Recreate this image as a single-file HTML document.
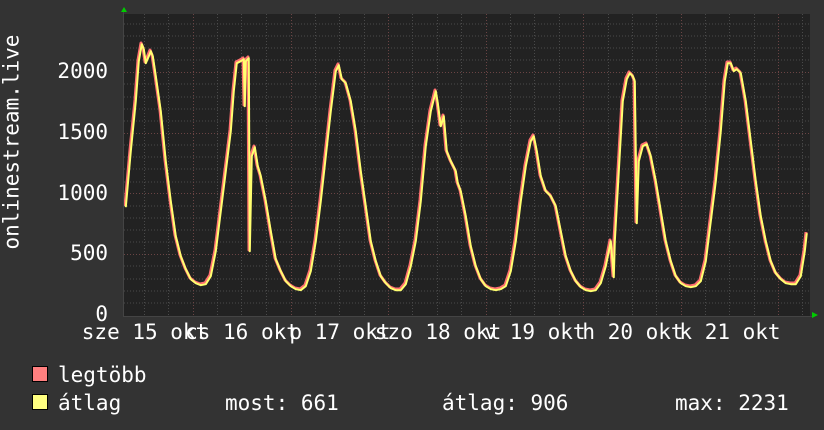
<!DOCTYPE html>
<html><head><meta charset="utf-8"><style>
body{margin:0;background:#333;width:824px;height:430px;overflow:hidden;position:relative;font-family:"DejaVu Sans Mono","Liberation Mono",monospace;color:#fff}
.t{position:absolute;font-size:21px;white-space:pre;line-height:1}
.c{width:200px;text-align:center}
.sq{position:absolute;width:14px;height:14px;border:1px solid #000}
</style></head><body>
<svg width="824" height="430" style="position:absolute;left:0;top:0">
<rect x="124" y="14" width="686" height="302" fill="#222"/>
<g stroke="#4a4a4a" stroke-dasharray="1,2">
<line x1="124" y1="303" x2="810" y2="303"/><line x1="124" y1="291" x2="810" y2="291"/><line x1="124" y1="279" x2="810" y2="279"/><line x1="124" y1="266" x2="810" y2="266"/>
<line x1="124" y1="242" x2="810" y2="242"/><line x1="124" y1="230" x2="810" y2="230"/><line x1="124" y1="218" x2="810" y2="218"/><line x1="124" y1="206" x2="810" y2="206"/>
<line x1="124" y1="182" x2="810" y2="182"/><line x1="124" y1="169" x2="810" y2="169"/><line x1="124" y1="157" x2="810" y2="157"/><line x1="124" y1="145" x2="810" y2="145"/>
<line x1="124" y1="121" x2="810" y2="121"/><line x1="124" y1="109" x2="810" y2="109"/><line x1="124" y1="97" x2="810" y2="97"/><line x1="124" y1="84" x2="810" y2="84"/>
<line x1="124" y1="60" x2="810" y2="60"/><line x1="124" y1="48" x2="810" y2="48"/><line x1="124" y1="36" x2="810" y2="36"/><line x1="124" y1="24" x2="810" y2="24"/>
<line x1="144.5" y1="14" x2="144.5" y2="316"/><line x1="168.5" y1="14" x2="168.5" y2="316"/><line x1="217.5" y1="14" x2="217.5" y2="316"/><line x1="241.5" y1="14" x2="241.5" y2="316"/><line x1="266.5" y1="14" x2="266.5" y2="316"/>
<line x1="315.5" y1="14" x2="315.5" y2="316"/><line x1="339.5" y1="14" x2="339.5" y2="316"/><line x1="364.5" y1="14" x2="364.5" y2="316"/>
<line x1="412.5" y1="14" x2="412.5" y2="316"/><line x1="437.5" y1="14" x2="437.5" y2="316"/><line x1="461.5" y1="14" x2="461.5" y2="316"/>
<line x1="510.5" y1="14" x2="510.5" y2="316"/><line x1="534.5" y1="14" x2="534.5" y2="316"/><line x1="559.5" y1="14" x2="559.5" y2="316"/>
<line x1="608.5" y1="14" x2="608.5" y2="316"/><line x1="632.5" y1="14" x2="632.5" y2="316"/><line x1="656.5" y1="14" x2="656.5" y2="316"/>
<line x1="705.5" y1="14" x2="705.5" y2="316"/><line x1="729.5" y1="14" x2="729.5" y2="316"/><line x1="754.5" y1="14" x2="754.5" y2="316"/><line x1="802.5" y1="14" x2="802.5" y2="316"/>
</g>
<g stroke="#6a4444" stroke-dasharray="1,2">
<line x1="124" y1="254.5" x2="810" y2="254.5"/><line x1="124" y1="193.5" x2="810" y2="193.5"/><line x1="124" y1="133.5" x2="810" y2="133.5"/><line x1="124" y1="72.5" x2="810" y2="72.5"/>
<line x1="193.5" y1="14" x2="193.5" y2="316"/><line x1="291.5" y1="14" x2="291.5" y2="316"/><line x1="388.5" y1="14" x2="388.5" y2="316"/><line x1="486.5" y1="14" x2="486.5" y2="316"/><line x1="583.5" y1="14" x2="583.5" y2="316"/><line x1="681.5" y1="14" x2="681.5" y2="316"/><line x1="778.5" y1="14" x2="778.5" y2="316"/>
</g>
<g fill="none" stroke-linejoin="round">
<polyline stroke="#ff7070" stroke-width="3" points="125,206 130,150 135,100 138,60 141,43 143,48 145,62 148,55 150,50 152,55 155,75 160,110 165,160 170,200 175,235 180,255 185,268 190,278 195,282 200,284 205,283 210,275 215,250 220,210 225,170 230,130 233,90 236,62 240,60 243,58 244,105 245,60 248,57 249,250 251,155 254,146 257,165 260,175 265,200 270,230 275,258 280,270 285,280 290,285 295,288 300,289 305,285 310,270 315,240 320,200 325,155 330,110 335,70 338,64 341,78 345,82 350,100 355,130 360,170 365,205 370,240 375,260 380,275 385,282 390,287 395,289 400,289 405,283 410,265 415,240 420,200 425,145 430,110 435,90 437,102 440,125 443,115 446,150 450,160 455,170 457,182 460,190 465,215 470,245 475,265 480,278 485,285 490,288 495,289 500,288 505,285 510,270 515,240 520,200 525,165 530,140 533,135 536,150 540,175 545,190 550,195 555,205 560,230 565,255 570,270 575,280 580,286 585,289 590,290 595,289 600,282 605,265 610,240 613,276 614,240 618,170 622,100 626,78 629,72 632,75 634,80 636,222 638,160 642,145 646,143 650,155 655,180 660,210 665,240 670,260 675,275 680,282 685,285 690,286 695,285 700,280 705,260 710,220 715,180 720,130 724,80 727,62 730,62 733,70 736,68 740,72 745,100 750,140 755,180 760,215 765,240 770,260 775,272 780,278 785,282 790,283 795,283 800,275 804,250 806,232"/>
<polyline stroke="#ffff70" stroke-width="2" transform="translate(0.8,1.2)" points="125,206 130,150 135,100 138,60 141,43 143,48 145,62 148,55 150,50 152,55 155,75 160,110 165,160 170,200 175,235 180,255 185,268 190,278 195,282 200,284 205,283 210,275 215,250 220,210 225,170 230,130 233,90 236,62 240,60 243,58 244,105 245,60 248,57 249,250 251,155 254,146 257,165 260,175 265,200 270,230 275,258 280,270 285,280 290,285 295,288 300,289 305,285 310,270 315,240 320,200 325,155 330,110 335,70 338,64 341,78 345,82 350,100 355,130 360,170 365,205 370,240 375,260 380,275 385,282 390,287 395,289 400,289 405,283 410,265 415,240 420,200 425,145 430,110 435,90 437,102 440,125 443,115 446,150 450,160 455,170 457,182 460,190 465,215 470,245 475,265 480,278 485,285 490,288 495,289 500,288 505,285 510,270 515,240 520,200 525,165 530,140 533,135 536,150 540,175 545,190 550,195 555,205 560,230 565,255 570,270 575,280 580,286 585,289 590,290 595,289 600,282 605,265 610,240 613,276 614,240 618,170 622,100 626,78 629,72 632,75 634,80 636,222 638,160 642,145 646,143 650,155 655,180 660,210 665,240 670,260 675,275 680,282 685,285 690,286 695,285 700,280 705,260 710,220 715,180 720,130 724,80 727,62 730,62 733,70 736,68 740,72 745,100 750,140 755,180 760,215 765,240 770,260 775,272 780,278 785,282 790,283 795,283 800,275 804,250 806,232"/>
</g>
<line x1="124" y1="316.5" x2="812" y2="316.5" stroke="#444"/>
<line x1="123.5" y1="12" x2="123.5" y2="317" stroke="#444"/>
<polygon points="121,12 127,12 124,7" fill="#0c0"/>
<polygon points="812,312 812,318 818,315" fill="#0c0"/>
</svg>
<div class="t" style="right:716px;top:61px">2000</div>
<div class="t" style="right:716px;top:122px">1500</div>
<div class="t" style="right:716px;top:183px">1000</div>
<div class="t" style="right:716px;top:243px">500</div>
<div class="t" style="right:716px;top:304px">0</div>
<div class="t" style="left:-73px;top:154px;transform:rotate(-90deg);width:170px;text-align:center">onlinestream.live</div>
<div class="t c" style="left:45px;top:322px">sze 15 okt</div>
<div class="t c" style="left:142px;top:322px">cs 16 okt</div>
<div class="t c" style="left:240px;top:322px">p 17 okt</div>
<div class="t c" style="left:338px;top:322px">szo 18 okt</div>
<div class="t c" style="left:435px;top:322px">v 19 okt</div>
<div class="t c" style="left:533px;top:322px">h 20 okt</div>
<div class="t c" style="left:630px;top:322px">k 21 okt</div>
<div class="sq" style="left:32px;top:366px;background:#ff7f7f"></div>
<div class="sq" style="left:32px;top:394px;background:#ffff80"></div>
<div class="t" style="left:58px;top:365px">legtöbb</div>
<div class="t" style="left:58px;top:393px">átlag</div>
<div class="t" style="left:225px;top:393px">most: 661</div>
<div class="t" style="left:442px;top:393px">átlag: 906</div>
<div class="t" style="left:675px;top:393px">max: 2231</div>
</body></html>
